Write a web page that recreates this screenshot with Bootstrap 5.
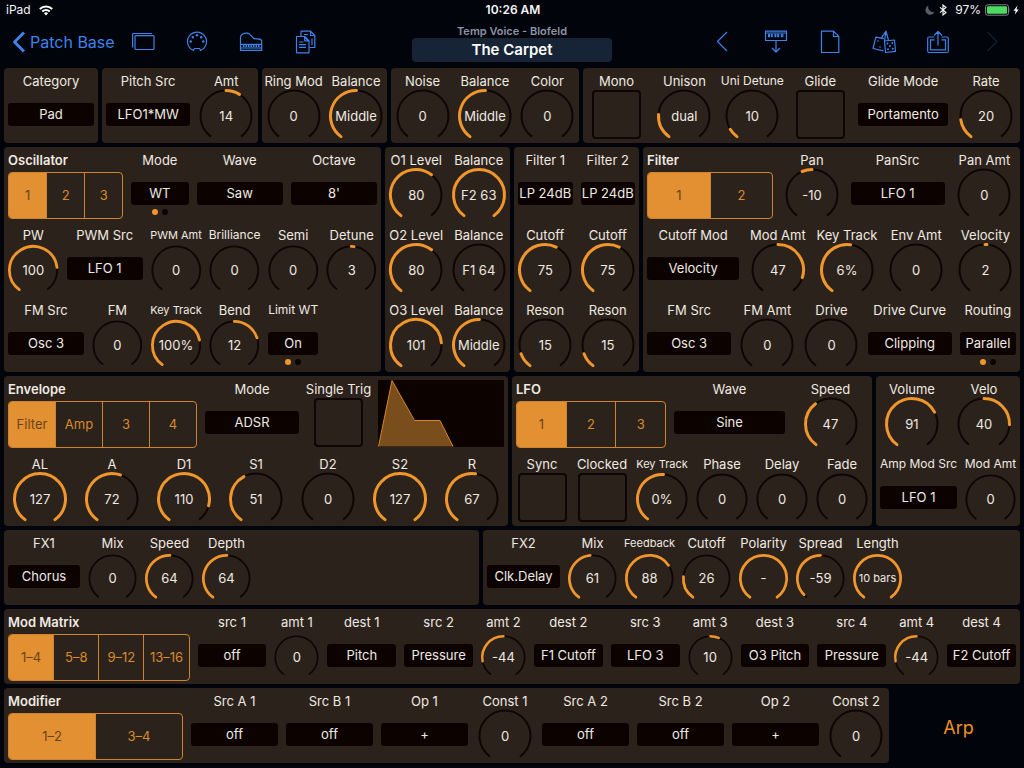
<!DOCTYPE html>
<html lang="en">
<head>
<meta charset="utf-8">
<meta name="viewport" content="width=device-width, initial-scale=1">
<title>Patch Base – The Carpet</title>
<link href="https://cdn.jsdelivr.net/npm/bootstrap@5.3.0/dist/css/bootstrap.min.css" rel="stylesheet">
<style>
  :root { --ink: #efe9e2; --panel: #2b231b; --well: #0c0301; --amber: #e39032; --arc: #f0962c; --blue: #3f82ea; }
  body { background: #01040b; color: var(--ink); font-family: Inter, "Liberation Sans", sans-serif; font-size: 13px; line-height: 16px; }
  .status { display: grid; grid-template-columns: 1fr auto 1fr; height: 20px; padding: 0 4px 0 6px; font-size: 12px; color: #f4f6fa; }
  .topbar { display: grid; grid-template-columns: minmax(0, 1fr) 200px minmax(0, 1fr); height: 48px; }
  .tools-start { padding-left: 12px; }
  .tools-end { padding-right: 5px; }
  .tool { width: 54px; height: 44px; color: var(--blue); background: none; border: 0; padding: 0; display: flex; align-items: center; justify-content: center; flex: none; }
  .tool svg, .back svg { fill: none; stroke: currentColor; stroke-width: 1.2; stroke-linejoin: round; flex: none; }
  .back svg { stroke-width: 3; }
  .tool:disabled { color: #14202f; }
  .back { width: 104px; height: 44px; color: var(--blue); font-size: 16px; text-decoration: none; white-space: nowrap; flex: none; }
  .device { font-size: 11px; font-weight: 600; line-height: 14px; color: #8c93a6; }
  .patch-name { background: #172436; color: #fff; font-size: 15px; font-weight: 600; height: 24px; line-height: 24px; border: 0; border-radius: 4px; width: 100%; padding: 0; }

  .deck { display: grid; gap: 4px; padding: 0 4px 5px; }
  .band, .strip { display: grid; }
  .band { gap: 4px; }
  .band-voice { grid-template-columns: 94fr 156fr 125fr 187fr 437fr; }
  .band-osc { grid-template-columns: 377fr 125fr 125fr 377fr; }
  .band-env { grid-template-columns: 504fr 360fr 144fr; }
  .band-fx { grid-template-columns: 475fr 537fr; }
  .band-modifier { grid-template-columns: 885fr 127fr; }
  .panel { background: var(--panel); border-radius: 4px; min-width: 0; }
  .strip { height: 75px; grid-auto-flow: column; grid-auto-columns: minmax(0, 1fr); }
  .s-pitch { grid-template-columns: 92fr 64fr; }
  .s-voice { grid-template-columns: 68fr 68fr 68fr 68fr 98fr 68fr; }
  .s-osc1 { grid-template-columns: 123fr 65fr 94fr 94fr; }
  .s-osc2 { grid-template-columns: 168fr repeat(5, 117fr); }
  .s-osc2.lead-dial { grid-template-columns: 117fr 168fr repeat(4, 117fr); }
  .s-flt1 { grid-template-columns: 134fr 69fr 102fr 71fr; }
  .s-flt2 { grid-template-columns: 100fr repeat(4, 69fr); }
  .s-flt3 { grid-template-columns: 92fr 64fr 64fr 92fr 64fr; }
  .s-env { grid-template-columns: 197fr 102fr 71fr 134fr; }
  .s-lfo { grid-template-columns: 158fr 119fr 83fr; }
  .s-amp { grid-template-columns: 85fr 59fr; }
  .s-fx1 { grid-template-columns: 80fr repeat(3, 57fr) 224fr; }
  .s-fx2 { grid-template-columns: 81fr repeat(6, 57fr) 114fr; }
  .s-matrix { grid-template-columns: 190fr repeat(4, 77fr 53fr 77fr); }
  .s-modifier { grid-template-columns: 183fr repeat(2, 95fr 95fr 95fr 66fr); }

  .ctl { padding: 0 4px; min-width: 0; display: flex; flex-direction: column; align-items: center; }
  .cap { height: 24px; line-height: 26px; white-space: nowrap; flex: none; }
  .cap-s { font-size: 12px; }
  .cap-xs { font-size: 11px; }
  .cap-title { font-weight: 600; align-self: flex-start; }
  .dial { position: relative; width: 100%; max-width: 54px; height: 48px; flex: none; display: flex; align-items: center; justify-content: center; }
  .dial svg { width: 100%; aspect-ratio: 1; flex: none; overflow: visible; fill: none; }
  .dial .track { stroke: #0f0502; stroke-width: 2; }
  .dial .sweep { stroke: var(--arc); stroke-width: 3; stroke-linecap: round; }
  .dial output { position: absolute; inset: 0; display: flex; align-items: center; justify-content: center; padding: 0; white-space: nowrap; }
  .dial input { position: absolute; inset: 0; width: 100%; height: 100%; opacity: 0; margin: 0; }
  .pick { appearance: none; width: 100%; height: 23px; margin-top: 11px; padding: 0; border: 0; border-radius: 3px; background: var(--well); color: var(--ink); font-size: 13px; line-height: 23px; text-align: center; text-align-last: center; flex: none; }
  .dots { display: flex; gap: 4px; margin-top: 4px; }
  .dots span { width: 6px; height: 6px; border-radius: 50%; background: var(--well); }
  .dots span:first-child { background: var(--arc); }
  .box { appearance: none; width: 49px; height: 49px; margin: -2px 0 0; border: 2px solid #0f0502; border-radius: 4px; background: none; flex: none; }
  .seg { width: 100%; height: 47px; margin-top: 1px; border: 1px solid #cf842a; border-radius: 4px; overflow: hidden; }
  .seg .btn { display: flex; align-items: center; justify-content: center; flex: 1 1 0; min-width: 0; padding: 0; border: 0; border-radius: 0; border-left: 1px solid #cf842a; color: #d98a2d; font-size: 13px; margin: 0 !important; }
  .seg .btn:first-of-type { border-left: 0; }
  .seg .btn-check:checked + .btn { background: var(--amber); color: #68431a; }
  .graph { width: 100%; height: 67px; margin-top: 4px; background: var(--well); display: block; }
  .arp { color: #f0921e; font-size: 18px; border: 0; background: none; padding: 4px 0 0 4px; }
</style>
</head>
<body>
<header>
  <div class="status align-items-center">
    <div class="d-flex align-items-center gap-2">
      <span>iPad</span>
      <svg width="14" height="11" viewBox="0 0 14 11" fill="none" stroke="#fff" stroke-width="2" aria-label="Wi-Fi"><path d="M.8 4A9 9 0 0 1 13.2 4M3.2 6.600a5.600 5.600 0 0 1 7.600 0"/><path d="M4.900 8.300a3 3 0 0 1 4.200 0L7 10.600z" fill="#fff" stroke="none"/></svg>
    </div>
    <span class="fw-semibold">10:26 AM</span>
    <div class="d-flex align-items-center justify-content-end gap-1">
      <svg width="10" height="10" viewBox="0 0 10 10" fill="#5b5e66"><path d="M3.500.5A4.800 4.800 0 1 0 9.600 7 5 5 0 0 1 3.500.5z"/></svg>
      <svg width="8" height="12" viewBox="0 0 8 12" fill="none" stroke="#fff" stroke-width="1.100"><path d="M1 3.300 7 8.500 4 11V1l3 2.500L1 8.700"/></svg>
      <span class="ms-1">97%</span>
      <svg width="35" height="12" viewBox="0 0 35 12"><rect x=".5" y=".8" width="23" height="10.400" rx="2" fill="none" stroke="#7d8088"/><rect x="2" y="2.300" width="20" height="7.400" rx="1" fill="#4cdb60"/><path d="M24.500 4.300q1.300 1.700 0 3.400z" fill="#7d8088"/><path d="M32.500 1.500 28.500 6.800h2.200l-.9 3.800 4-5.200h-2.300z" fill="#fff"/></svg>
    </div>
  </div>
  <nav class="topbar" aria-label="Patch">
    <div class="d-flex tools-start">
      <a class="back d-flex align-items-center" href="#"><svg class="me-1" width="14" height="22" viewBox="0 0 14 22"><path d="M12 1.500 2.500 11 12 20.500"/></svg>Patch Base</a>
      <button class="tool" type="button" aria-label="Windows"><svg width="24" height="24" viewBox="0 0 24 24"><rect x="4" y="5.700" width="19" height="13.800" rx="1"/><path d="M1.600 17.500V4.500a1 1 0 0 1 1-1H21"/></svg></button>
      <button class="tool" type="button" aria-label="MIDI"><svg width="24" height="24" viewBox="0 0 24 24"><path d="M8.500 20.400A9.500 9.500 0 1 1 15.500 20.400L14.500 18.500h-5z"/><g fill="currentColor" stroke="none"><circle cx="5.700" cy="11.500" r="1.200"/><circle cx="7.800" cy="7.200" r="1.200"/><circle cx="12" cy="5.300" r="1.200"/><circle cx="16.200" cy="7.200" r="1.200"/><circle cx="18.300" cy="11.500" r="1.200"/></g></svg></button>
      <button class="tool" type="button" aria-label="Keyboard"><svg width="24" height="24" viewBox="0 0 24 24"><path d="M1.500 20.400V7C2 4.500 5 2.700 8.500 3.200c4 .6 4 5.300 8 5.600 3 .2 5.500-.5 6.200 2v9.600zM1.500 14.300h21.200M1.500 18h21.200"/><path d="M4 16h17" stroke-width="2.500" stroke-dasharray="1.500 1"/></svg></button>
      <button class="tool" type="button" aria-label="Copy"><svg width="24" height="24" viewBox="0 0 24 24"><path d="M8 6V1.200h9.500l4.300 4.300v12h-5.300M17.500 1.200v4.300h4.300M11 4.500h4M12 7.500l4 4M19 8.500v6.500"/><path d="M3.500 6.500h8.200l4.300 4.300v12H3.500zM11.700 6.500v4.300H16M6 12h4.500M6 14.700h7M6 17.400h7"/></svg></button>
    </div>
    <div class="text-center pt-1">
      <div class="device">Temp Voice - Blofeld</div>
      <button class="patch-name" type="button">The Carpet</button>
    </div>
    <div class="d-flex justify-content-end tools-end">
      <button class="tool" type="button" aria-label="Previous"><svg width="24" height="24" viewBox="0 0 24 24"><path d="M17 2 7.500 11.500 17 21"/></svg></button>
      <button class="tool" type="button" aria-label="Send to synth"><svg width="24" height="24" viewBox="0 0 24 24"><rect x="1.500" y="1.200" width="21" height="9.300"/><path d="M1.500 3h21M12 10.500V22M8 18l4 4 4-4"/><path d="M4 5.500h16" stroke-width="3.500" stroke-dasharray="2 .8 2 1.600"/></svg></button>
      <button class="tool" type="button" aria-label="New"><svg width="24" height="24" viewBox="0 0 24 24"><path d="M3.500 1.200h12l5.300 5.300v16H3.500zM15.500 1.200v5.300h5.300"/></svg></button>
      <button class="tool" type="button" aria-label="Randomize"><svg width="24" height="24" viewBox="0 0 24 24"><path d="M12.500 11 22.500 10l1 11.300-10 1.200zM11.500 20.800 1 18.500 3.800 7.200l8 1.400M9.300 8.200 14 1.200l2.500 9.300M14 1.200 12.500 11"/><g fill="currentColor" stroke="none"><circle cx="15.500" cy="13.500" r="1"/><circle cx="20.300" cy="13" r="1"/><circle cx="18" cy="16" r="1"/><circle cx="16" cy="19.300" r="1"/><circle cx="20.800" cy="18.700" r="1"/><circle cx="6" cy="11" r=".8"/><circle cx="8" cy="17" r=".8"/></g></svg></button>
      <button class="tool" type="button" aria-label="Share"><svg width="24" height="24" viewBox="0 0 24 24"><path d="M8.500 7H3.200a1.500 1.500 0 0 0-1.500 1.500V21a1.500 1.500 0 0 0 1.500 1.500h17.600a1.500 1.500 0 0 0 1.500-1.500V8.500A1.500 1.500 0 0 0 20.800 7H15.500M8.500 9.800H4.500v10h15v-10h-4M12 15.500V1.500M8 5.500l4-4 4 4"/></svg></button>
      <button class="tool" type="button" aria-label="Next" disabled><svg width="24" height="24" viewBox="0 0 24 24"><path d="M7.500 2 17 11.500 7.500 21"/></svg></button>
    </div>
  </nav>
</header>

<main class="deck">
  <div class="band band-voice">
    <section class="panel strip">
      <label class="ctl"><span class="cap">Category</span><select class="pick"><option>Pad</option></select></label>
    </section>
    <section class="panel strip s-pitch">
      <label class="ctl"><span class="cap">Pitch Src</span><select class="pick"><option>LFO1*MW</option></select></label>
      <label class="ctl"><span class="cap">Amt</span><span class="dial"><input type="range" min="-63" max="63" value="14"><output>14</output></span></label>
    </section>
    <section class="panel strip">
      <label class="ctl"><span class="cap">Ring Mod</span><span class="dial"><input type="range" max="127" value="0"><output>0</output></span></label>
      <label class="ctl"><span class="cap">Balance</span><span class="dial"><input type="range" max="127" value="64"><output>Middle</output></span></label>
    </section>
    <section class="panel strip">
      <label class="ctl"><span class="cap">Noise</span><span class="dial"><input type="range" max="127" value="0"><output>0</output></span></label>
      <label class="ctl"><span class="cap">Balance</span><span class="dial"><input type="range" max="127" value="64"><output>Middle</output></span></label>
      <label class="ctl"><span class="cap">Color</span><span class="dial"><input type="range" min="-63" max="63" value="0"><output>0</output></span></label>
    </section>
    <section class="panel strip s-voice">
      <label class="ctl"><span class="cap">Mono</span><input class="box" type="checkbox"></label>
      <label class="ctl"><span class="cap">Unison</span><span class="dial"><input type="range" max="5" value="1"><output>dual</output></span></label>
      <label class="ctl"><span class="cap cap-s">Uni Detune</span><span class="dial"><input type="range" max="127" value="10"><output>10</output></span></label>
      <label class="ctl"><span class="cap">Glide</span><input class="box" type="checkbox"></label>
      <label class="ctl"><span class="cap">Glide Mode</span><select class="pick"><option>Portamento</option></select></label>
      <label class="ctl"><span class="cap">Rate</span><span class="dial"><input type="range" max="127" value="20"><output>20</output></span></label>
    </section>
  </div>

  <div class="band band-osc">
    <section class="panel">
      <div class="strip s-osc1">
        <div class="ctl"><span class="cap cap-title" id="t-osc">Oscillator</span>
          <div class="btn-group seg" role="group" aria-labelledby="t-osc">
            <input class="btn-check" type="radio" name="osc" id="osc1" checked><label class="btn" for="osc1">1</label>
            <input class="btn-check" type="radio" name="osc" id="osc2"><label class="btn" for="osc2">2</label>
            <input class="btn-check" type="radio" name="osc" id="osc3"><label class="btn" for="osc3">3</label>
          </div></div>
        <label class="ctl"><span class="cap">Mode</span><select class="pick"><option>WT</option></select><span class="dots"><span></span><span></span></span></label>
        <label class="ctl"><span class="cap">Wave</span><select class="pick"><option>Saw</option></select></label>
        <label class="ctl"><span class="cap">Octave</span><select class="pick"><option>8'</option></select></label>
      </div>
      <div class="strip s-osc2 lead-dial">
        <label class="ctl"><span class="cap">PW</span><span class="dial"><input type="range" max="127" value="100"><output>100</output></span></label>
        <label class="ctl"><span class="cap">PWM Src</span><select class="pick"><option>LFO 1</option></select></label>
        <label class="ctl"><span class="cap cap-xs">PWM Amt</span><span class="dial"><input type="range" min="-63" max="63" value="0"><output>0</output></span></label>
        <label class="ctl"><span class="cap cap-s">Brilliance</span><span class="dial"><input type="range" max="127" value="0"><output>0</output></span></label>
        <label class="ctl"><span class="cap">Semi</span><span class="dial"><input type="range" min="-12" max="12" value="0"><output>0</output></span></label>
        <label class="ctl"><span class="cap">Detune</span><span class="dial"><input type="range" min="-63" max="63" value="3"><output>3</output></span></label>
      </div>
      <div class="strip s-osc2">
        <label class="ctl"><span class="cap">FM Src</span><select class="pick"><option>Osc 3</option></select></label>
        <label class="ctl"><span class="cap">FM</span><span class="dial"><input type="range" max="127" value="0"><output>0</output></span></label>
        <label class="ctl"><span class="cap cap-xs">Key Track</span><span class="dial"><input type="range" min="-200" max="190" value="100" data-fill="start"><output>100%</output></span></label>
        <label class="ctl"><span class="cap">Bend</span><span class="dial"><input type="range" min="-24" max="24" value="12"><output>12</output></span></label>
        <label class="ctl"><span class="cap cap-s">Limit WT</span><select class="pick"><option>On</option></select><span class="dots"><span></span><span></span></span></label>
      </div>
    </section>
    <section class="panel">
      <div class="strip">
        <label class="ctl"><span class="cap">O1 Level</span><span class="dial"><input type="range" max="127" value="80"><output>80</output></span></label>
        <label class="ctl"><span class="cap">Balance</span><span class="dial"><input type="range" max="127" value="127"><output>F2 63</output></span></label>
      </div>
      <div class="strip">
        <label class="ctl"><span class="cap">O2 Level</span><span class="dial"><input type="range" max="127" value="80"><output>80</output></span></label>
        <label class="ctl"><span class="cap">Balance</span><span class="dial"><input type="range" max="127" value="0"><output>F1 64</output></span></label>
      </div>
      <div class="strip">
        <label class="ctl"><span class="cap">O3 Level</span><span class="dial"><input type="range" max="127" value="101"><output>101</output></span></label>
        <label class="ctl"><span class="cap">Balance</span><span class="dial"><input type="range" max="127" value="64"><output>Middle</output></span></label>
      </div>
    </section>
    <section class="panel">
      <div class="strip">
        <label class="ctl"><span class="cap">Filter 1</span><select class="pick"><option>LP 24dB</option></select></label>
        <label class="ctl"><span class="cap">Filter 2</span><select class="pick"><option>LP 24dB</option></select></label>
      </div>
      <div class="strip">
        <label class="ctl"><span class="cap">Cutoff</span><span class="dial"><input type="range" max="127" value="75"><output>75</output></span></label>
        <label class="ctl"><span class="cap">Cutoff</span><span class="dial"><input type="range" max="127" value="75"><output>75</output></span></label>
      </div>
      <div class="strip">
        <label class="ctl"><span class="cap">Reson</span><span class="dial"><input type="range" max="127" value="15"><output>15</output></span></label>
        <label class="ctl"><span class="cap">Reson</span><span class="dial"><input type="range" max="127" value="15"><output>15</output></span></label>
      </div>
    </section>
    <section class="panel">
      <div class="strip s-flt1">
        <div class="ctl"><span class="cap cap-title" id="t-flt">Filter</span>
          <div class="btn-group seg" role="group" aria-labelledby="t-flt">
            <input class="btn-check" type="radio" name="flt" id="flt1" checked><label class="btn" for="flt1">1</label>
            <input class="btn-check" type="radio" name="flt" id="flt2"><label class="btn" for="flt2">2</label>
          </div></div>
        <label class="ctl"><span class="cap">Pan</span><span class="dial"><input type="range" min="-63" max="63" value="-10"><output>-10</output></span></label>
        <label class="ctl"><span class="cap">PanSrc</span><select class="pick"><option>LFO 1</option></select></label>
        <label class="ctl"><span class="cap">Pan Amt</span><span class="dial"><input type="range" min="-63" max="63" value="0"><output>0</output></span></label>
      </div>
      <div class="strip s-flt2">
        <label class="ctl"><span class="cap">Cutoff Mod</span><select class="pick"><option>Velocity</option></select></label>
        <label class="ctl"><span class="cap">Mod Amt</span><span class="dial"><input type="range" min="-63" max="63" value="47"><output>47</output></span></label>
        <label class="ctl"><span class="cap">Key Track</span><span class="dial"><input type="range" min="-200" max="190" value="6" data-fill="start"><output>6%</output></span></label>
        <label class="ctl"><span class="cap">Env Amt</span><span class="dial"><input type="range" min="-63" max="63" value="0"><output>0</output></span></label>
        <label class="ctl"><span class="cap">Velocity</span><span class="dial"><input type="range" min="-63" max="63" value="2"><output>2</output></span></label>
      </div>
      <div class="strip s-flt3">
        <label class="ctl"><span class="cap">FM Src</span><select class="pick"><option>Osc 3</option></select></label>
        <label class="ctl"><span class="cap">FM Amt</span><span class="dial"><input type="range" max="127" value="0"><output>0</output></span></label>
        <label class="ctl"><span class="cap">Drive</span><span class="dial"><input type="range" max="127" value="0"><output>0</output></span></label>
        <label class="ctl"><span class="cap">Drive Curve</span><select class="pick"><option>Clipping</option></select></label>
        <label class="ctl"><span class="cap">Routing</span><select class="pick"><option>Parallel</option></select><span class="dots"><span></span><span></span></span></label>
      </div>
    </section>
  </div>

  <div class="band band-env">
    <section class="panel">
      <div class="strip s-env">
        <div class="ctl"><span class="cap cap-title" id="t-env">Envelope</span>
          <div class="btn-group seg" role="group" aria-labelledby="t-env">
            <input class="btn-check" type="radio" name="env" id="env1" checked><label class="btn" for="env1">Filter</label>
            <input class="btn-check" type="radio" name="env" id="env2"><label class="btn" for="env2">Amp</label>
            <input class="btn-check" type="radio" name="env" id="env3"><label class="btn" for="env3">3</label>
            <input class="btn-check" type="radio" name="env" id="env4"><label class="btn" for="env4">4</label>
          </div></div>
        <label class="ctl"><span class="cap">Mode</span><select class="pick"><option>ADSR</option></select></label>
        <label class="ctl"><span class="cap">Single Trig</span><input class="box" type="checkbox"></label>
        <div class="ctl"><svg class="graph" viewBox="0 0 126 67" preserveAspectRatio="none" role="img" aria-label="Envelope shape"><path d="M.5 66.500 14 .5 36.500 40.500H62L75 66.500z" fill="#7a4d1c"/><path d="M.5 66.500 14 .5 36.500 40.500H62L75 66.500" fill="none" stroke="#d58729"/></svg></div>
      </div>
      <div class="strip">
        <label class="ctl"><span class="cap">AL</span><span class="dial"><input type="range" max="127" value="127"><output>127</output></span></label>
        <label class="ctl"><span class="cap">A</span><span class="dial"><input type="range" max="127" value="72"><output>72</output></span></label>
        <label class="ctl"><span class="cap">D1</span><span class="dial"><input type="range" max="127" value="110"><output>110</output></span></label>
        <label class="ctl"><span class="cap">S1</span><span class="dial"><input type="range" max="127" value="51"><output>51</output></span></label>
        <label class="ctl"><span class="cap">D2</span><span class="dial"><input type="range" max="127" value="0"><output>0</output></span></label>
        <label class="ctl"><span class="cap">S2</span><span class="dial"><input type="range" max="127" value="127"><output>127</output></span></label>
        <label class="ctl"><span class="cap">R</span><span class="dial"><input type="range" max="127" value="67"><output>67</output></span></label>
      </div>
    </section>
    <section class="panel">
      <div class="strip s-lfo">
        <div class="ctl"><span class="cap cap-title" id="t-lfo">LFO</span>
          <div class="btn-group seg" role="group" aria-labelledby="t-lfo">
            <input class="btn-check" type="radio" name="lfo" id="lfo1" checked><label class="btn" for="lfo1">1</label>
            <input class="btn-check" type="radio" name="lfo" id="lfo2"><label class="btn" for="lfo2">2</label>
            <input class="btn-check" type="radio" name="lfo" id="lfo3"><label class="btn" for="lfo3">3</label>
          </div></div>
        <label class="ctl"><span class="cap">Wave</span><select class="pick"><option>Sine</option></select></label>
        <label class="ctl"><span class="cap">Speed</span><span class="dial"><input type="range" max="127" value="47"><output>47</output></span></label>
      </div>
      <div class="strip">
        <label class="ctl"><span class="cap">Sync</span><input class="box" type="checkbox"></label>
        <label class="ctl"><span class="cap">Clocked</span><input class="box" type="checkbox"></label>
        <label class="ctl"><span class="cap cap-xs">Key Track</span><span class="dial"><input type="range" min="-200" max="190" value="0" data-fill="start"><output>0%</output></span></label>
        <label class="ctl"><span class="cap">Phase</span><span class="dial"><input type="range" max="127" value="0"><output>0</output></span></label>
        <label class="ctl"><span class="cap">Delay</span><span class="dial"><input type="range" max="127" value="0"><output>0</output></span></label>
        <label class="ctl"><span class="cap">Fade</span><span class="dial"><input type="range" min="-63" max="63" value="0"><output>0</output></span></label>
      </div>
    </section>
    <section class="panel">
      <div class="strip">
        <label class="ctl"><span class="cap">Volume</span><span class="dial"><input type="range" max="127" value="91"><output>91</output></span></label>
        <label class="ctl"><span class="cap">Velo</span><span class="dial"><input type="range" min="-63" max="63" value="40"><output>40</output></span></label>
      </div>
      <div class="strip s-amp">
        <label class="ctl"><span class="cap cap-s">Amp Mod Src</span><select class="pick"><option>LFO 1</option></select></label>
        <label class="ctl"><span class="cap cap-s">Mod Amt</span><span class="dial"><input type="range" min="-63" max="63" value="0"><output>0</output></span></label>
      </div>
    </section>
  </div>

  <div class="band band-fx">
    <section class="panel strip s-fx1">
      <label class="ctl"><span class="cap">FX1</span><select class="pick"><option>Chorus</option></select></label>
      <label class="ctl"><span class="cap">Mix</span><span class="dial"><input type="range" max="127" value="0"><output>0</output></span></label>
      <label class="ctl"><span class="cap">Speed</span><span class="dial"><input type="range" max="127" value="64"><output>64</output></span></label>
      <label class="ctl"><span class="cap">Depth</span><span class="dial"><input type="range" max="127" value="64"><output>64</output></span></label>
    </section>
    <section class="panel strip s-fx2">
      <label class="ctl"><span class="cap">FX2</span><select class="pick"><option>Clk.Delay</option></select></label>
      <label class="ctl"><span class="cap">Mix</span><span class="dial"><input type="range" max="127" value="61"><output>61</output></span></label>
      <label class="ctl"><span class="cap cap-xs">Feedback</span><span class="dial"><input type="range" max="127" value="88"><output>88</output></span></label>
      <label class="ctl"><span class="cap">Cutoff</span><span class="dial"><input type="range" max="127" value="26"><output>26</output></span></label>
      <label class="ctl"><span class="cap">Polarity</span><span class="dial"><input type="range" max="1" value="1"><output>-</output></span></label>
      <label class="ctl"><span class="cap">Spread</span><span class="dial"><input type="range" min="-63" max="63" value="-59"><output>-59</output></span></label>
      <label class="ctl"><span class="cap">Length</span><span class="dial"><input type="range" max="29" value="29"><output class="cap-xs">10 bars</output></span></label>
    </section>
  </div>

  <section class="panel strip s-matrix">
    <div class="ctl"><span class="cap cap-title" id="t-mtx">Mod Matrix</span>
      <div class="btn-group seg" role="group" aria-labelledby="t-mtx">
        <input class="btn-check" type="radio" name="mtx" id="mtx1" checked><label class="btn" for="mtx1">1–4</label>
        <input class="btn-check" type="radio" name="mtx" id="mtx2"><label class="btn" for="mtx2">5–8</label>
        <input class="btn-check" type="radio" name="mtx" id="mtx3"><label class="btn" for="mtx3">9–12</label>
        <input class="btn-check" type="radio" name="mtx" id="mtx4"><label class="btn" for="mtx4">13–16</label>
      </div></div>
    <label class="ctl"><span class="cap">src 1</span><select class="pick"><option>off</option></select></label>
    <label class="ctl"><span class="cap">amt 1</span><span class="dial"><input type="range" min="-63" max="63" value="0"><output>0</output></span></label>
    <label class="ctl"><span class="cap">dest 1</span><select class="pick"><option>Pitch</option></select></label>
    <label class="ctl"><span class="cap">src 2</span><select class="pick"><option>Pressure</option></select></label>
    <label class="ctl"><span class="cap">amt 2</span><span class="dial"><input type="range" min="-63" max="63" value="-44"><output>-44</output></span></label>
    <label class="ctl"><span class="cap">dest 2</span><select class="pick"><option>F1 Cutoff</option></select></label>
    <label class="ctl"><span class="cap">src 3</span><select class="pick"><option>LFO 3</option></select></label>
    <label class="ctl"><span class="cap">amt 3</span><span class="dial"><input type="range" min="-63" max="63" value="10"><output>10</output></span></label>
    <label class="ctl"><span class="cap">dest 3</span><select class="pick"><option>O3 Pitch</option></select></label>
    <label class="ctl"><span class="cap">src 4</span><select class="pick"><option>Pressure</option></select></label>
    <label class="ctl"><span class="cap">amt 4</span><span class="dial"><input type="range" min="-63" max="63" value="-44"><output>-44</output></span></label>
    <label class="ctl"><span class="cap">dest 4</span><select class="pick"><option>F2 Cutoff</option></select></label>
  </section>

  <div class="band band-modifier">
    <section class="panel strip s-modifier">
      <div class="ctl"><span class="cap cap-title" id="t-mod">Modifier</span>
        <div class="btn-group seg" role="group" aria-labelledby="t-mod">
          <input class="btn-check" type="radio" name="mod" id="mod1" checked><label class="btn" for="mod1">1–2</label>
          <input class="btn-check" type="radio" name="mod" id="mod2"><label class="btn" for="mod2">3–4</label>
        </div></div>
      <label class="ctl"><span class="cap">Src A 1</span><select class="pick"><option>off</option></select></label>
      <label class="ctl"><span class="cap">Src B 1</span><select class="pick"><option>off</option></select></label>
      <label class="ctl"><span class="cap">Op 1</span><select class="pick"><option>+</option></select></label>
      <label class="ctl"><span class="cap">Const 1</span><span class="dial"><input type="range" min="-63" max="63" value="0"><output>0</output></span></label>
      <label class="ctl"><span class="cap">Src A 2</span><select class="pick"><option>off</option></select></label>
      <label class="ctl"><span class="cap">Src B 2</span><select class="pick"><option>off</option></select></label>
      <label class="ctl"><span class="cap">Op 2</span><select class="pick"><option>+</option></select></label>
      <label class="ctl"><span class="cap">Const 2</span><span class="dial"><input type="range" min="-63" max="63" value="0"><output>0</output></span></label>
    </section>
    <button class="arp" type="button">Arp</button>
  </div>
</main>

<script src="https://cdn.jsdelivr.net/npm/bootstrap@5.3.0/dist/js/bootstrap.bundle.min.js"></script>
<script>
  // Dial arcs run from -144 to 144 degrees, measured clockwise from the top.
  const SPAN = 144, R = 25.5, C = 27;
  const point = deg => {
    const a = deg * Math.PI / 180;
    return (C + R * Math.sin(a)).toFixed(2) + ' ' + (C - R * Math.cos(a)).toFixed(2);
  };
  const arc = (from, to) => `M${point(from)}A${R} ${R} 0 ${to - from > 180 ? 1 : 0} 1 ${point(to)}`;

  function drawDial(dial) {
    const input = dial.querySelector('input');
    const min = +input.min, max = +input.max, value = +input.value;
    const angle = -SPAN + 2 * SPAN * (value - min) / (max - min);
    // Signed parameters fill from the centre, the others from the left end.
    const origin = min < 0 && input.dataset.fill !== 'start' ? 0 : -SPAN;
    const from = Math.min(origin, angle), to = Math.max(origin, angle);
    dial.querySelector('svg')?.remove();
    dial.insertAdjacentHTML('afterbegin',
      `<svg viewBox="0 0 54 54" aria-hidden="true"><path class="track" d="${arc(-SPAN, SPAN)}"/>` +
      (to > from ? `<path class="sweep" d="${arc(from, to)}"/>` : '') + '</svg>');
  }
  document.querySelectorAll('.dial').forEach(dial => {
    drawDial(dial);
    dial.querySelector('input').addEventListener('input', e => {
      dial.querySelector('output').textContent = e.target.value;
      drawDial(dial);
    });
  });
</script>
</body>
</html>
